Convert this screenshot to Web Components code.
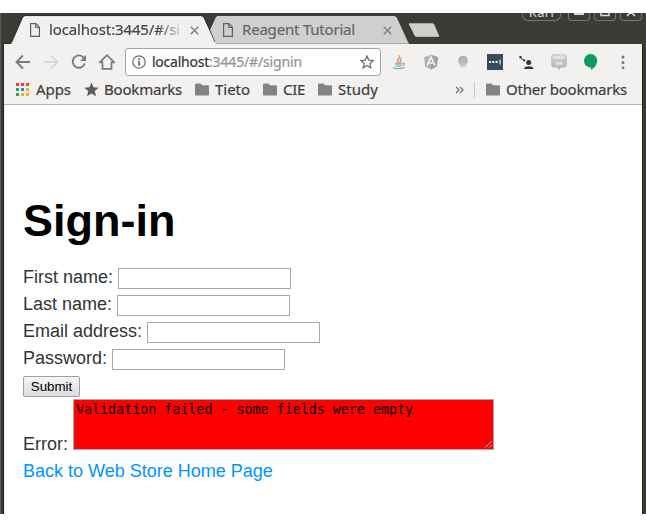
<!DOCTYPE html>
<html lang="en">
<head>
<meta charset="utf-8">
<title>Sign-in</title>
<style>
html,body{margin:0;background:#fff;width:646px;height:527px;overflow:hidden}
body{font-family:"Liberation Sans",Arial,sans-serif}
</style>
</head>
<body>
<browser-window>
  <tab-strip slot="tabs">
    <browser-tab active label="localhost:3445/#/si" fit="131"></browser-tab>
    <browser-tab label="Reagent Tutorial" fit="113"></browser-tab>
  </tab-strip>
  <nav-bar slot="bars"></nav-bar>
  <bookmark-bar slot="bars"></bookmark-bar>
  <sign-in-page></sign-in-page>
</browser-window>
<script>
const define = (name, html, setup) => customElements.define(name, class extends HTMLElement {
  connectedCallback() {
    if (this.shadowRoot) return;
    this.attachShadow({mode: 'open'}).innerHTML = html;
    if (setup) setup(this, this.shadowRoot);
  }
});

// One line of interface text whose tracking is set so that it spans a given width.
define('fit-text', `<style>
:host{display:block;white-space:nowrap;flex:none;font-family:"Noto Sans","Open Sans",sans-serif;-webkit-text-stroke:.2px currentColor}
span{display:inline-block}
</style><span><slot></slot></span>`, (el, root) => {
  const width = parseFloat(el.getAttribute('width'));
  const span = root.querySelector('span');
  const spacing = (width - span.getBoundingClientRect().width) / el.textContent.length;
  span.style.letterSpacing = spacing + 'px';
  el.style.width = width + 'px';
});

define('browser-window', `<style>
:host{display:block;padding:13px 0;width:646px;height:527px;box-sizing:border-box}
.frame{display:flex;flex-direction:column;height:501px;background:linear-gradient(90deg,#5a5955 0 1px,#3c3b37 1px)}
.body{flex:1;margin:0 4px 0 4px;background:#fff;display:flex;flex-direction:column;box-shadow:-1px 0 #24231f,1px 0 #24231f}
</style>
<div class="frame"><slot name="tabs"></slot><div class="body"><slot name="bars"></slot><slot></slot></div></div>`);

define('tab-strip', `<style>
:host{display:flex;height:31px;overflow:hidden;padding-left:4px;position:relative}
.new{flex:none;margin:9px 0 0 -4px;width:36px;height:18px}
window-controls{margin-left:auto}
</style>
<slot></slot>
<svg class="new" viewBox="0 0 36 18"><path d="M2.500 .800H25.500Q27 .800 27.700 2.500L32.500 13.500Q33 15.300 31.500 15.300H9.500Q8 15.300 7.200 13.700L1.500 2.500Q1 .800 2.500 .800Z" fill="#d0cfcd" stroke="#2b2a26" stroke-width=".8"/></svg>
<window-controls></window-controls>`);

define('browser-tab', `<style>
:host{display:block;position:relative;width:212px;height:31px;flex:none}
:host([active]){z-index:1}
:host(:not([active])){margin-left:-9px;width:204px}
svg{display:block}
.bg{position:absolute;inset:0}
.row{position:relative;display:flex;align-items:center;height:28px;padding:3px 0 0 26px}
:host(:not([active])) .row{padding-left:16px}
.page{margin-right:9px;flex:none}
fit-text{font-size:15px;line-height:20px;color:#454545;margin-top:-2px;margin-right:10px}
:host([active]) fit-text{-webkit-mask-image:linear-gradient(90deg,#000 108px,transparent 136px)}
:host(:not([active])) fit-text{color:#666;margin-right:28px}
</style><div class="bg"></div><div class="row">
<svg class="page" width="10" height="14" viewBox="0 0 10 14"><path d="M.6.600H6L9.400 4.200V13.400H.600ZM5.800.700V4.500H9.400" fill="none" stroke="#606060" stroke-width="1.200"/></svg>
<span class="label"></span>
<svg width="9" height="9" viewBox="0 0 9 9"><path d="M.8.800L8.200 8.200M8.200.800L.8 8.200" stroke="#858585" stroke-width="1.600"/></svg>
</div>`, (el, root) => {
  const active = el.hasAttribute('active');
  root.querySelector('.bg').innerHTML = active
    ? '<svg width="212" height="31"><path d="M0 31H6Q7.500 31 8 29L18.500 5Q19.300 3 21 3H197Q199 3 200 5L211 29Q212 31 212 31Z" fill="#f2f1f0"/><path d="M0 30.300H6Q7.500 30.300 8 28.500L18.500 4.500Q19.300 2.600 21 2.600H197Q199 2.600 200 4.500L211 29" fill="none" stroke="#23221f" stroke-width=".7"/></svg>'
    : '<svg width="204" height="31"><path d="M3 17L8.500 5Q9.300 3 11 3H187Q189 3 190 5L201 29Q201.500 30.500 203 30.500H10Q8 30.500 7 28Z" fill="#d0cfcd"/><path d="M3 17L8 30.500H202" fill="none" stroke="#aaa9a7"/></svg>';
  const t = document.createElement('fit-text');
  t.setAttribute('width', el.getAttribute('fit'));
  t.textContent = el.getAttribute('label');
  root.querySelector('.label').replaceWith(t);
});

define('window-controls', `<style>
:host{display:flex;gap:4px;height:8px;padding-right:4px}
div{box-sizing:border-box;width:22px;height:8px;border:1px solid #77756e;border-top:0;border-radius:0 0 4px 4px;overflow:hidden;display:flex;justify-content:center}
.name{width:39px;margin-right:3px;border-radius:0 0 6px 6px}
.name span{font:13px/15px "Noto Sans",sans-serif;color:#dfdbd2;margin-top:-8px;letter-spacing:.3px}
svg{display:block;overflow:visible}
</style><div class="name"><span>Kari</span></div>
<div><svg width="12" height="7"><path d="M1 0H11V2H1Z" fill="#dfdbd2"/></svg></div>
<div><svg width="12" height="7"><path d="M2 0V2.500H10V0" fill="none" stroke="#dfdbd2" stroke-width="1.500"/></svg></div>
<div><svg width="12" height="7"><path d="M2 3L6 -1L10 3" fill="none" stroke="#dfdbd2" stroke-width="1.700"/></svg></div>`);

define('nav-bar', `<style>
:host{display:flex;height:36px;background:#f2f1f0;align-items:center;padding-left:11px}
svg{display:block;flex:none}
.nav{display:flex;gap:12px;width:110px}
.box{box-sizing:border-box;width:256px;height:28px;border:1px solid #a5a5a5;border-radius:3px;background:#fff;display:flex;align-items:center;padding-left:6px}
.box fit-text{font-size:14px;line-height:20px;margin-top:-1px}
.box .info{margin-right:6px}
.star{margin-left:auto;margin-right:6px}
.ext{display:flex;gap:16px;margin-left:10px}
.more{margin-left:22px}
</style>
<div class="nav">
<svg width="16" height="16"><path d="M15 8H2M8 1.500L1.500 8L8 14.500" fill="none" stroke="#7a7a7a" stroke-width="1.900"/></svg>
<svg width="16" height="16"><path d="M1 8H14M8 1.500L14.500 8L8 14.500" fill="none" stroke="#d8d8d8" stroke-width="1.900"/></svg>
<svg width="16" height="16"><path d="M12.700 3.600A6.200 6.200 0 1 0 13.800 9.500" fill="none" stroke="#7a7a7a" stroke-width="1.900"/><path d="M15 1V7H9Z" fill="#7a7a7a"/></svg>
<svg width="16" height="16"><path d="M.8 8.300L8 1.200L15.200 8.300H12.500V14.800H3.500V8.300Z" fill="none" stroke="#7a7a7a" stroke-width="1.700"/></svg>
</div>
<div class="box">
<svg class="info" width="14" height="14"><circle cx="7" cy="7" r="6.200" fill="none" stroke="#707070" stroke-width="1.300"/><path d="M6.200 6H7.900V10.700H6.200ZM6.200 3.200H7.900V4.900H6.200Z" fill="#666"/></svg>
<fit-text width="57" style="color:#333">localhost</fit-text><fit-text width="93" style="color:#929292">:3445/#/signin</fit-text>
<svg class="star" width="14" height="14"><path d="M7 1L8.700 5.100L13.200 5.500L9.800 8.400L10.800 12.800L7 10.500L3.200 12.800L4.200 8.400L.8 5.500L5.300 5.100Z" fill="none" stroke="#707070" stroke-width="1.300"/></svg>
</div>
<div class="ext">
<svg width="16" height="16"><path d="M8 9C3 6 10 4 8 1C11 4 5 5.500 8 9ZM10.500 4C8 5 10 7 8.500 9C12 7 8.500 6 10.500 4Z" fill="#ef8945" stroke="#ef8945" stroke-width=".6"/><path d="M4 9.500H10.500M4.500 11Q7 12 10.500 11M11.500 9.500Q14.500 9 12 11.700M2 13.500Q7 16 13.500 13.300" fill="none" stroke="#82a6be" stroke-width="1.300"/><path d="M4.500 9.500H10.500V13H5.500Z" fill="#afc5d2"/></svg>
<svg width="16" height="16"><path d="M8 .800L15 3.300L13.800 12.500L8 15.500L2.200 12.500L1 3.300Z" fill="#b1b1b1"/><path d="M8 .800L15 3.300L13.800 12.500L8 15.500Z" fill="#a2a2a2"/><path d="M4 11.500L8 3L12 11.500M5.700 9H10.300" fill="none" stroke="#f2f2f2" stroke-width="1.700"/></svg>
<svg width="16" height="16"><defs><linearGradient id="g" x2="0" y2="1"><stop stop-color="#aaa"/><stop offset="1" stop-color="#c2c2c2"/></linearGradient></defs><circle cx="8" cy="9.700" r="4" fill="#dadada"/><circle cx="8" cy="6.700" r="4.900" fill="url(#g)"/></svg>
<svg width="16" height="16"><path d="M0 0H16V16H0Z" fill="#364c58"/><path d="M2 7H4V9H2ZM5.300 7H7.300V9H5.300ZM8.600 7H10.600V9H8.600ZM12.600 5.500H13.600V10.500H12.600Z" fill="#fff"/></svg>
<svg width="16" height="16"><path d="M1.500 2.500Q2 6 5.500 6.500" fill="none" stroke="#333" stroke-width="1"/><path d="M.4 2H2.400V4.300H.4ZM4 5.500H6.200V7.300H4Z" fill="#333"/><circle cx="9.700" cy="8.600" r="2.500" fill="#333"/><path d="M5.300 15V13.800Q6 12.200 9.700 12.200Q13.500 12.200 14.200 13.800V15Z" fill="#333"/></svg>
<svg width="16" height="16"><defs><linearGradient id="w" x2="0" y2="1"><stop stop-color="#d2d2d2"/><stop offset="1" stop-color="#b3b3b3"/></linearGradient></defs><path d="M3 0H13Q16 0 16 3V10Q16 13.500 13 13.500H10L8 16L6 13.500H3Q0 13.500 0 10V3Q0 0 3 0Z" fill="url(#w)"/><g fill="#f5f5f5" font-family="Liberation Sans,sans-serif" font-size="5" font-weight="bold" text-anchor="middle"><text x="8" y="5.300">walk</text><text x="8" y="11">me</text></g></svg>
<svg width="16" height="16"><path d="M7.500 0A6.700 6.700 0 0 1 14.200 6.800Q14.200 12 8 16V13.500A6.700 6.700 0 0 1 7.500 0Z" fill="#0b9d5e"/></svg>
</div>
<svg class="more" width="4" height="14"><g fill="#777"><circle cx="2" cy="2" r="1.500"/><circle cx="2" cy="7.500" r="1.500"/><circle cx="2" cy="13" r="1.400"/></g></svg>`);

define('folder-icon', `<style>:host{display:block;width:14px;height:13px;flex:none;margin-right:6px}svg{display:block}</style>
<svg width="14" height="13"><path d="M1.200.500H5.500L7 2.200H12.800Q14 2.200 14 3.400V11.200Q14 12.500 12.800 12.500H1.200Q0 12.500 0 11.200V1.700Q0 .500 1.200.500Z" fill="#828282"/></svg>`);

define('bookmark-bar', `<style>
:host{display:flex;box-sizing:border-box;height:25px;background:#f2f1f0;align-items:center;padding:0 0 0 12px;border-bottom:1px solid #b3b2b1}
svg{display:block;flex:none;margin-top:-5px}
folder-icon{margin-top:-5px}
fit-text{font-size:15px;line-height:18px;color:#3d3d3d;margin-top:-6px;margin-right:12px}
svg.apps{margin:-5px 7px 0 0}
svg.star{margin:-5px 5px 0 1px}
.sep{width:1px;height:16px;background:#c9c8c7;margin:-5px 11px 0 10px}
svg.chev{margin-left:auto}
</style>
<svg class="apps" width="13" height="13"><g><path d="M0 0H3V3H0ZM5 0H8V3H5ZM10 0H13V3H10Z" fill="#ee4035"/><path d="M0 5H3V8H0ZM0 10H3V13H0Z" fill="#28a35b"/><path d="M5 5H8V8H5Z" fill="#2488f0"/><path d="M10 5H13V8H10ZM5 10H8V13H5ZM10 10H13V13H10Z" fill="#fbb006"/></g></svg>
<fit-text width="35">Apps</fit-text>
<svg class="star" width="15" height="15"><path d="M7.500 .500L9.500 5.300L14.700 5.700L10.700 9.100L12 14.200L7.500 11.400L3 14.200L4.300 9.100L.3 5.700L5.500 5.300Z" fill="#5b5b5b"/></svg>
<fit-text width="78" style="margin-right:13px">Bookmarks</fit-text>
<folder-icon></folder-icon><fit-text width="35" style="margin-right:13px">Tieto</fit-text>
<folder-icon></folder-icon><fit-text width="22" style="margin-right:13px">CIE</fit-text>
<folder-icon></folder-icon><fit-text width="40">Study</fit-text>
<svg class="chev" width="9" height="8"><path d="M1 1L4 4L1 7M5 1L8 4L5 7" fill="none" stroke="#777" stroke-width="1.400"/></svg>
<div class="sep"></div>
<folder-icon></folder-icon><fit-text width="121" style="margin-right:15px">Other bookmarks</fit-text>`);

define('form-field', `<style>
:host{display:flex;height:27px;align-items:flex-start;gap:5px;line-height:27px}
input{box-sizing:border-box;width:173px;height:21px;margin:4px 0 0;border:1px solid #a9a9a9;border-radius:0;background:#fff;padding:1px 3px;outline:0}
</style><label><slot></slot></label><input type="text">`);

define('error-field', `<style>
:host{display:flex;height:51px;align-items:flex-end;gap:5px}
label{line-height:27px;margin-bottom:-8px}
.area{box-sizing:border-box;width:421px;height:51px;border:1px solid #a9a9a9;background:#f00;color:#000;padding:2px;font:13.333px/16px "DejaVu Sans Mono",monospace;white-space:pre;position:relative}
svg{position:absolute;right:1px;bottom:1px}
</style><label>Error:</label><div class="area"><slot></slot><svg width="8" height="8"><path d="M1 7.500L7.500 1M5 7.500L7.500 5" stroke="#fff" stroke-width=".9"/><path d="M0 7.500L7.500 0M4 7.500L7.500 4" stroke="#700" stroke-width=".6"/></svg></div>`);

define('sign-in-page', `<style>
:host{display:block;flex:1;padding:90px 0 0 18px;border-left:1px solid #f2f1f0;font-size:18px;color:#333}
h1{margin:0 0 17px;font-size:45px;line-height:52px;color:#000}
button{display:block;box-sizing:border-box;margin:4px 0 2px;width:57px;height:21px;padding:0;border:1px solid #a0a0a0;border-radius:2px;background:linear-gradient(#f6f6f6,#ddd);font:13.333px "Liberation Sans",Arial,sans-serif;color:#000}
a{display:block;width:max-content;line-height:27px;margin-top:8px;color:#0095ff;text-decoration:none}
</style>
<h1>Sign-in</h1>
<form-field>First name:</form-field>
<form-field>Last name:</form-field>
<form-field>Email address:</form-field>
<form-field>Password:</form-field>
<button type="button">Submit</button>
<error-field>Validation failed - some fields were empty</error-field>
<a>Back to Web Store Home Page</a>`);
</script>
</body>
</html>
